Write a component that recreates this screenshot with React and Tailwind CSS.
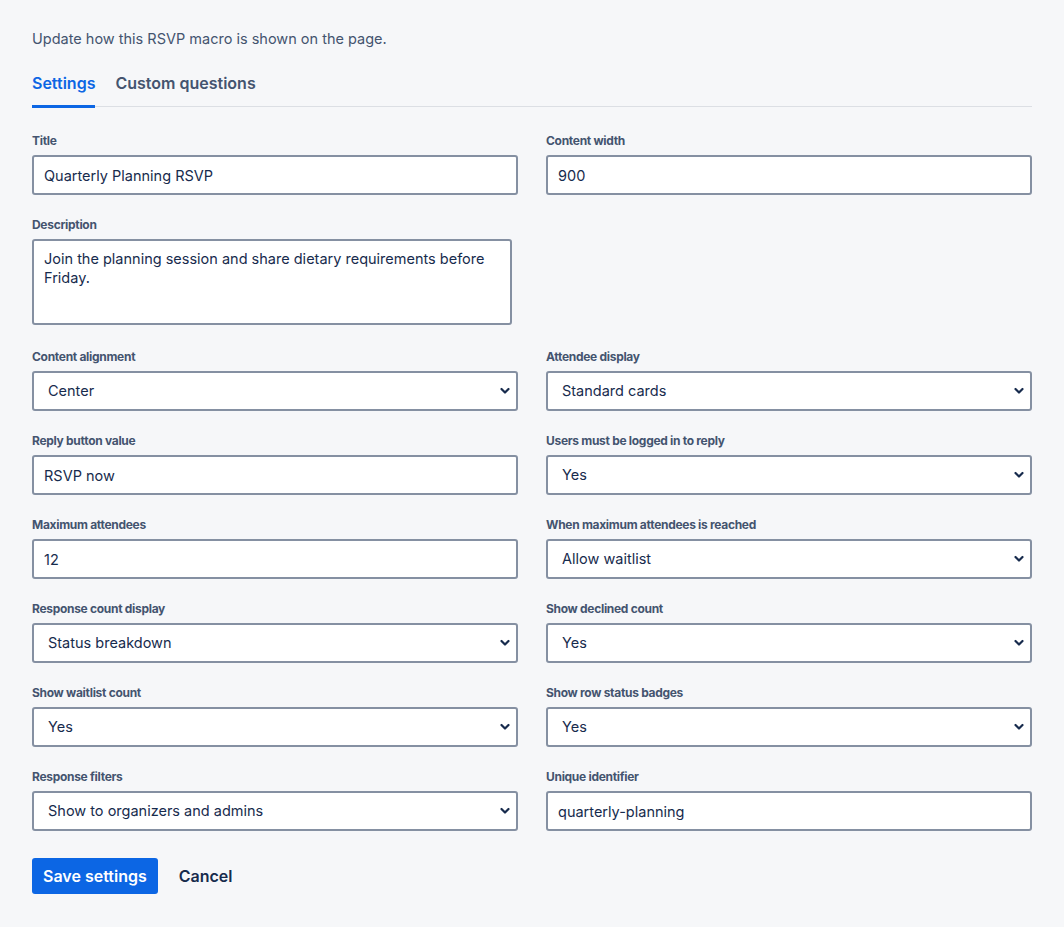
import { useState } from "react";

const labelCls = "block text-[12px] leading-4 font-bold tracking-[-0.3px] text-[#44546f] mb-1.5";
const inputCls =
  "w-full h-10 px-[10px] rounded-[3px] border-2 border-[#8590a2] bg-white text-[14.5px] text-[#172b4d] outline-none focus:border-[#0c66e4]";

const Field = ({ label, children }) => (
  <div className="mb-[22px]">
    <label className={labelCls}>{label}</label>
    {children}
  </div>
);

const TextInput = ({ value }) => {
  const [val, setVal] = useState(value);
  return <input type="text" value={val} onChange={(e) => setVal(e.target.value)} className={inputCls} />;
};

const Select = ({ value, options }) => {
  const [val, setVal] = useState(value);
  return (
    <div className="relative">
      <select
        value={val}
        onChange={(e) => setVal(e.target.value)}
        className={inputCls + " appearance-none pl-[14px] pr-8"}
      >
        {options.map((o) => (
          <option key={o}>{o}</option>
        ))}
      </select>
      <svg
        className="pointer-events-none absolute right-[8px] top-1/2 -translate-y-1/2"
        width="10"
        height="7"
        viewBox="0 0 10 7"
        fill="none"
      >
        <path d="M1.5 1.5L5 5L8.5 1.5" stroke="#172b4d" strokeWidth="2.2" strokeLinecap="round" strokeLinejoin="round" />
      </svg>
    </div>
  );
};

const App = () => {
  const [tab, setTab] = useState("settings");
  const [desc, setDesc] = useState("Join the planning session and share dietary requirements before Friday.");

  const tabCls = (active) =>
    "pb-[10px] text-[16px] leading-6 font-semibold border-b-[3px] -mb-[2px] " +
    (active ? "text-[#0c66e4] border-[#0c66e4]" : "text-[#44546f] border-transparent");

  return (
    <div className="min-h-screen bg-[#f6f7f9] font-['Inter','Liberation_Sans',sans-serif]">
      <div className="w-[1000px] ml-8 pt-[29px] pb-8">
        <p className="text-[14.5px] leading-5 text-[#44546f]">Update how this RSVP macro is shown on the page.</p>

        <div className="mt-[22px] flex gap-[20px] border-b border-[#dcdfe4] mb-[26px]">
          <button onClick={() => setTab("settings")} className={tabCls(tab === "settings")}>
            Settings
          </button>
          <button onClick={() => setTab("custom")} className={tabCls(tab === "custom")}>
            Custom questions
          </button>
        </div>

        <div className="grid grid-cols-2 gap-x-7">
          <Field label="Title">
            <TextInput value="Quarterly Planning RSVP" />
          </Field>
          <Field label="Content width">
            <TextInput value="900" />
          </Field>

          <div className="mb-[24px]">
            <label className={labelCls}>Description</label>
            <textarea
              value={desc}
              onChange={(e) => setDesc(e.target.value)}
              className="block w-[480px] h-[86px] px-[10px] py-[8px] rounded-[3px] border-2 border-[#8590a2] bg-white text-[14.5px] leading-[19px] text-[#172b4d] outline-none resize-none"
            />
          </div>
          <div />

          <Field label="Content alignment">
            <Select value="Center" options={["Left", "Center", "Right"]} />
          </Field>
          <Field label="Attendee display">
            <Select value="Standard cards" options={["Standard cards", "Compact list"]} />
          </Field>

          <Field label="Reply button value">
            <TextInput value="RSVP now" />
          </Field>
          <Field label="Users must be logged in to reply">
            <Select value="Yes" options={["Yes", "No"]} />
          </Field>

          <Field label="Maximum attendees">
            <TextInput value="12" />
          </Field>
          <Field label="When maximum attendees is reached">
            <Select value="Allow waitlist" options={["Allow waitlist", "Close replies"]} />
          </Field>

          <Field label="Response count display">
            <Select value="Status breakdown" options={["Status breakdown", "Total only", "Hidden"]} />
          </Field>
          <Field label="Show declined count">
            <Select value="Yes" options={["Yes", "No"]} />
          </Field>

          <Field label="Show waitlist count">
            <Select value="Yes" options={["Yes", "No"]} />
          </Field>
          <Field label="Show row status badges">
            <Select value="Yes" options={["Yes", "No"]} />
          </Field>

          <Field label="Response filters">
            <Select
              value="Show to organizers and admins"
              options={["Show to everyone", "Show to organizers and admins", "Hidden"]}
            />
          </Field>
          <Field label="Unique identifier">
            <TextInput value="quarterly-planning" />
          </Field>
        </div>

        <div className="flex items-center gap-[21px] mt-[5px]">
          <button className="h-9 px-[11px] rounded-[3px] bg-[#0c66e4] text-white text-[16px] font-semibold">
            Save settings
          </button>
          <button className="h-9 text-[16px] font-semibold text-[#172b4d]">Cancel</button>
        </div>
      </div>
    </div>
  );
};

export default App;
